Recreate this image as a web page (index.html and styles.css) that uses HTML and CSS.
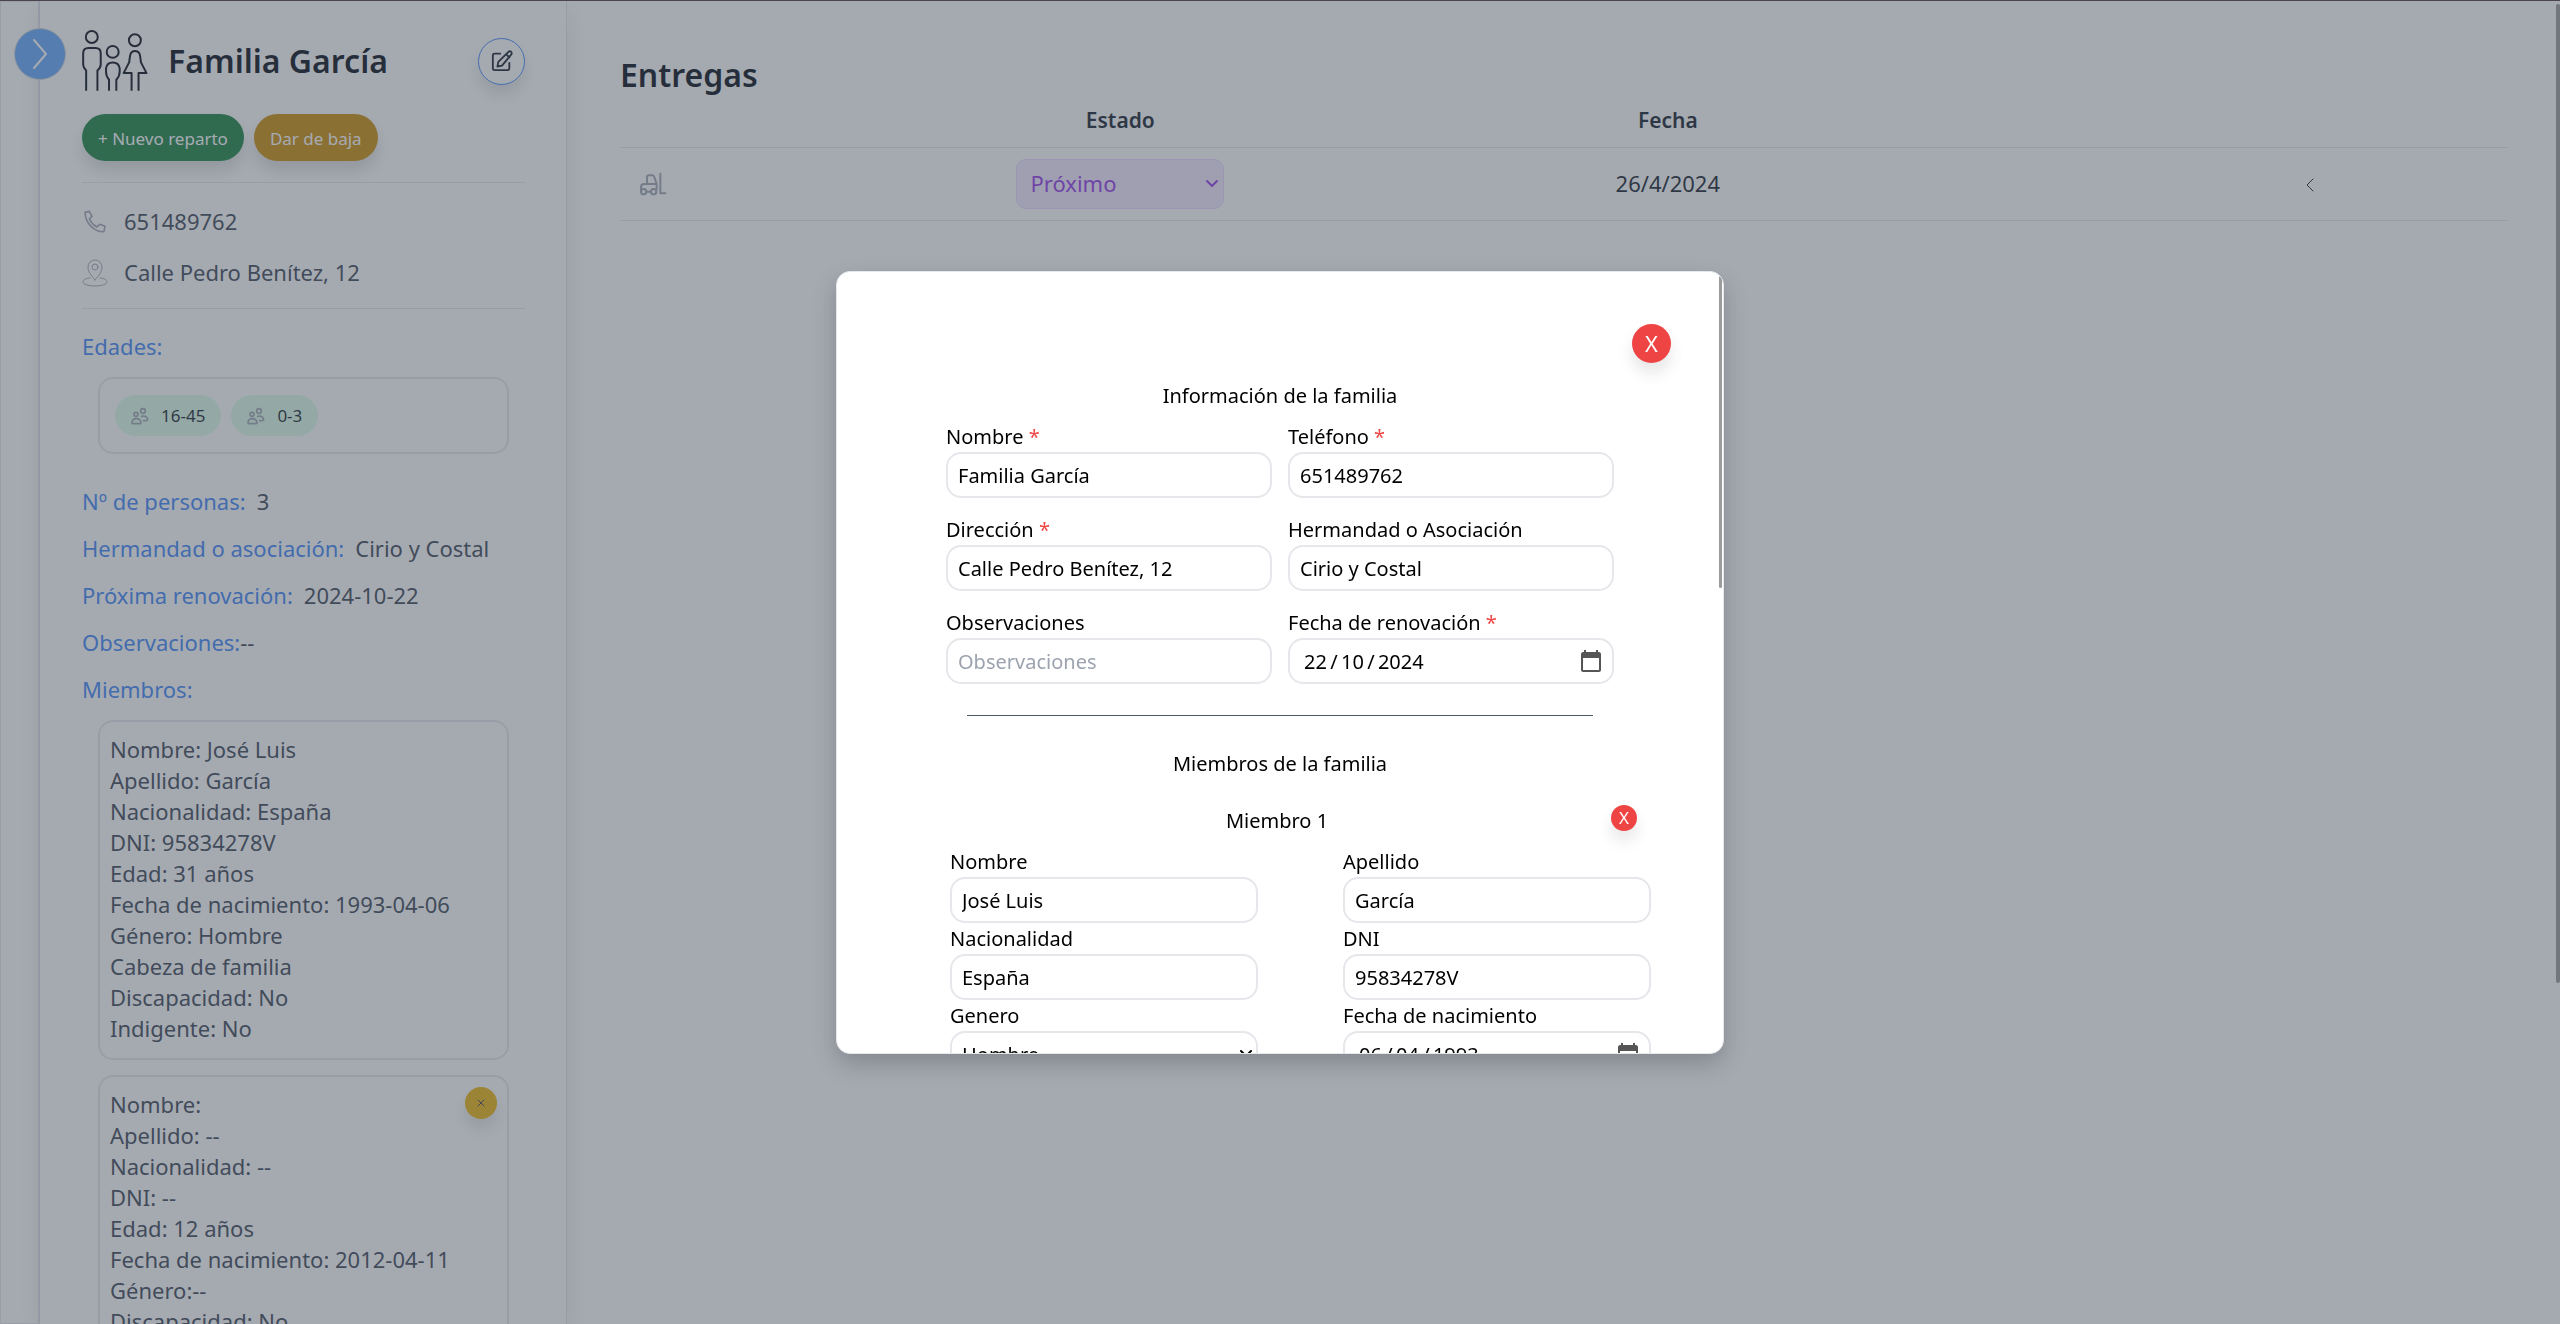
FILE: index.html
```html
<!DOCTYPE html>
<html lang="es">
<head>
<meta charset="utf-8">
<meta name="viewport" content="width=device-width, initial-scale=1">
<title>Familia García</title>
<link rel="stylesheet" href="styles.css">
</head>
<body>
<div class="page">
  <div class="rail">
    <button class="rail-toggle" type="button" aria-label="Abrir menú">
      <svg width="18" height="34" viewBox="0 0 18 34"><path d="M3 3 L15 17 L3 31"/></svg>
    </button>
  </div>

  <aside class="sidebar">
    <header class="family-head">
      <svg class="family-icon" width="66" height="62" viewBox="65 28 198 187">
        <circle cx="94" cy="49" r="18"/>
        <path d="M77 211V150Q68 142 68 132V98Q68 82 84 82H105Q121 82 121 98V132Q121 142 111 150V211"/>
        <circle cx="157" cy="94" r="18"/>
        <path d="M146 211V178Q137 168 137 155V143Q140 126 157 126Q175 126 178 143V155Q178 168 168 178V211"/>
        <circle cx="224" cy="59" r="18"/>
        <path d="M214 211V158H190L207 125C209 100 212 91 224 91C238 91 240 100 242 125L259 158H235V211"/>
      </svg>
      <h1>Familia García</h1>
      <button class="edit-button" type="button" aria-label="Editar familia">
        <svg width="22" height="22" viewBox="0 0 24 24"><path d="M10 4H4a2 2 0 0 0-2 2v14a2 2 0 0 0 2 2h14a2 2 0 0 0 2-2v-6"/><path d="M19 2a2 2 0 0 1 3 3L12 17l-5 1 1-5z"/><path d="M17 5l3 3"/></svg>
      </button>
    </header>
    <div class="actions">
      <button class="pill-button green" type="button">+ Nuevo reparto</button>
      <button class="pill-button amber" type="button">Dar de baja</button>
    </div>
    <div class="contact">
      <p><svg width="26" height="26" viewBox="18 20 78 78" stroke-width="5"><path d="M27 30L40 27L48 42L40 50Q48 66 62 74L72 66L87 72L84 87Q74 92 52 78Q28 60 27 30z"/></svg>651489762</p>
      <p><svg width="26" height="30" viewBox="0 0 26 30"><path d="M13 22C9 17 6 14 6 9a7 7 0 0 1 14 0c0 5-3 8-7 13z"/><circle cx="13" cy="9" r="3"/><path d="M8 20c-4 0-7 2-7 4s5 4 12 4 12-2 12-4-3-4-7-4"/></svg>Calle Pedro Benítez, 12</p>
    </div>
    <h2 class="label">Edades:</h2>
    <div class="card ages">
      <span class="age"><svg width="18" height="18" viewBox="18 18 54 54"><circle cx="33" cy="40" r="6"/><circle cx="54" cy="30" r="7"/><path d="M21 65Q22 53 34 53Q46 53 48 65Q48 68 44 68H25Q21 68 21 65z"/><path d="M50 46Q64 42 68 55Q68 60 56 59"/></svg>16-45</span>
      <span class="age"><svg width="18" height="18" viewBox="18 18 54 54"><circle cx="33" cy="40" r="6"/><circle cx="54" cy="30" r="7"/><path d="M21 65Q22 53 34 53Q46 53 48 65Q48 68 44 68H25Q21 68 21 65z"/><path d="M50 46Q64 42 68 55Q68 60 56 59"/></svg>0-3</span>
    </div>
    <dl class="facts">
      <div><dt>Nº de personas:</dt><dd>3</dd></div>
      <div><dt>Hermandad o asociación:</dt><dd>Cirio y Costal</dd></div>
      <div><dt>Próxima renovación:</dt><dd>2024-10-22</dd></div>
      <div class="tight"><dt>Observaciones:</dt><dd>--</dd></div>
    </dl>
    <h2 class="label">Miembros:</h2>
    <ul class="card member">
      <li>Nombre: José Luis</li>
      <li>Apellido: García</li>
      <li>Nacionalidad: España</li>
      <li>DNI: 95834278V</li>
      <li>Edad: 31 años</li>
      <li>Fecha de nacimiento: 1993-04-06</li>
      <li>Género: Hombre</li>
      <li>Cabeza de familia</li>
      <li>Discapacidad: No</li>
      <li>Indigente: No</li>
    </ul>
    <div class="card-wrap">
      <ul class="card member">
        <li>Nombre:</li>
        <li>Apellido: --</li>
        <li>Nacionalidad: --</li>
        <li>DNI: --</li>
        <li>Edad: 12 años</li>
        <li>Fecha de nacimiento: 2012-04-11</li>
        <li>Género:--</li>
        <li>Discapacidad: No</li>
      </ul>
      <button class="member-remove" type="button" aria-label="Dar de baja al miembro">
        <svg width="8" height="8" viewBox="0 0 8 8"><path d="M1 1l6 6M7 1L1 7"/></svg>
      </button>
    </div>
  </aside>

  <main class="deliveries">
    <h2>Entregas</h2>
    <table>
      <colgroup><col class="c-side"><col class="c-state"><col class="c-date"><col class="c-side"></colgroup>
      <thead><tr><th></th><th>Estado</th><th>Fecha</th><th></th></tr></thead>
      <tbody><tr>
        <td class="cell-icon"><svg width="28" height="24" viewBox="28 34 84 72"><path d="M52 70V50Q52 44 58 44H68Q72 44 74 49L81 70V86M34 88V80Q34 70 44 70H81M51 93H63M92 39V98H107"/><circle cx="42" cy="93" r="8"/><circle cx="72" cy="93" r="8"/></svg></td>
        <td><span class="select-box state"><select aria-label="Estado"><option>Próximo</option></select><svg width="14" height="10" viewBox="0 0 14 10"><path d="M2 2l5 5 5-5"/></svg></span></td>
        <td>26/4/2024</td>
        <td><svg class="fold" width="8" height="14" viewBox="0 0 8 14"><path d="M7 1L1 7l6 6"/></svg></td>
      </tr></tbody>
    </table>
  </main>
</div>

<div class="overlay">
  <div class="page-scroll"></div>
  <section class="modal" role="dialog" aria-modal="true" aria-label="Editar familia">
    <div class="modal-scroll"></div>
    <div class="modal-top"><button class="close" type="button">X</button></div>
    <form>
      <h3>Información de la familia</h3>
      <div class="family-grid">
        <div class="field"><label for="f-nombre">Nombre <b>*</b></label><input id="f-nombre" type="text" value="Familia García"></div>
        <div class="field"><label for="f-tel">Teléfono <b>*</b></label><input id="f-tel" type="text" value="651489762"></div>
        <div class="field"><label for="f-dir">Dirección <b>*</b></label><input id="f-dir" type="text" value="Calle Pedro Benítez, 12"></div>
        <div class="field"><label for="f-her">Hermandad o Asociación</label><input id="f-her" type="text" value="Cirio y Costal"></div>
        <div class="field"><label for="f-obs">Observaciones</label><input id="f-obs" type="text" placeholder="Observaciones"></div>
        <div class="field"><label for="f-ren">Fecha de renovación <b>*</b></label><span class="date-box"><input id="f-ren" type="text" value="22&#8201;/&#8201;10&#8201;/&#8201;2024"><svg width="20" height="22" viewBox="0 0 20 22"><path fill-rule="evenodd" d="M3 0h2v2h10V0h2v2h1c1 0 2 1 2 2v16c0 1-1 2-2 2H2c-1 0-2-1-2-2V4c0-1 1-2 2-2h1zM2 8v12h16V8z"/></svg></span></div>
      </div>
      <hr>
      <h3>Miembros de la familia</h3>
      <div class="member-head"><h4>Miembro 1</h4><button class="close small" type="button">X</button></div>
      <div class="member-grid">
        <div class="field"><label for="m-nombre">Nombre</label><input id="m-nombre" type="text" value="José Luis"></div>
        <div class="field"><label for="m-ape">Apellido</label><input id="m-ape" type="text" value="García"></div>
        <div class="field"><label for="m-nac">Nacionalidad</label><input id="m-nac" type="text" value="España"></div>
        <div class="field"><label for="m-dni">DNI</label><input id="m-dni" type="text" value="95834278V"></div>
        <div class="field"><label for="m-gen">Genero</label><span class="select-box"><select id="m-gen"><option>Hombre</option></select><svg width="14" height="10" viewBox="0 0 14 10"><path d="M2 2l5 5 5-5"/></svg></span></div>
        <div class="field"><label for="m-fec">Fecha de nacimiento</label><span class="date-box"><input id="m-fec" type="text" value="06&#8201;/&#8201;04&#8201;/&#8201;1993"><svg width="20" height="22" viewBox="0 0 20 22"><path fill-rule="evenodd" d="M3 0h2v2h10V0h2v2h1c1 0 2 1 2 2v16c0 1-1 2-2 2H2c-1 0-2-1-2-2V4c0-1 1-2 2-2h1zM2 8v12h16V8z"/></svg></span></div>
      </div>
    </form>
  </section>
</div>
</body>
</html>
```
FILE: styles.css
```css
* { box-sizing: border-box; margin: 0; padding: 0; }
html, body { height: 100%; overflow: hidden; }
body {
  border-top: 1px solid #4b464b;
  background: #fff;
  color: #111827;
  font: 22px/31px "Noto Sans", sans-serif;
}
button, input, select { font: inherit; color: inherit; border: 0; background: none; }
svg { display: block; flex: none; fill: none; stroke: currentColor; stroke-linecap: round; stroke-linejoin: round; }
ul { list-style: none; }
.page { display: flex; height: 100%; }

.rail { flex: none; width: 40px; border: 1px solid #e5e7eb; border-right: 2px solid #d9dce6; position: relative; z-index: 1; }
.rail-toggle {
  position: absolute; left: 13px; top: 26px; width: 52px; height: 52px;
  display: grid; place-items: center; border: 1px solid #d1d5db; border-radius: 50%;
  background: #60a5fa; color: #fff;
}
.rail-toggle svg { stroke-width: 2; }

.sidebar {
  flex: none; width: 527px; padding: 27px 41px 0 42px; overflow: hidden;
  border-right: 1px solid #e5e7eb; color: #374151;
  box-shadow: 0 10px 24px rgba(0, 0, 0, .1);
}
.family-head { display: flex; align-items: center; height: 66px; }
.family-icon { color: #030712; stroke-width: 6; stroke-linecap: butt; }
h1, .deliveries h2 { font-size: 32px; line-height: 40px; font-weight: 600; color: #030712; }
h1 { margin-left: 20px; flex: 1; }
.edit-button {
  width: 47px; height: 47px; display: grid; place-items: center; border: 1px solid #3b82f6;
  border-radius: 50%; color: #111827; box-shadow: 0 10px 16px rgba(0, 0, 0, .12);
}
.edit-button svg { stroke-width: 2; }
.actions { display: flex; gap: 10px; padding: 20px 0 21px; border-bottom: 1px solid #e5e7eb; }
.pill-button { height: 47px; padding: 2px 16px 0; border-radius: 24px; color: #fff; font-size: 17px; box-shadow: 0 10px 16px rgba(0, 0, 0, .14); }
.green { background: #15803d; }
.amber { background: #ca8a04; }
.contact { display: grid; gap: 20px; padding: 23px 0 20px; border-bottom: 1px solid #e5e7eb; }
.contact p { display: flex; align-items: center; gap: 16px; }
.contact svg { color: #9ca3af; }
.label, dt { font-size: 22px; font-weight: 400; color: #3b82f6; }
.contact + .label { margin-top: 22px; }
.card { margin: 0 16px; border: 2px solid #e5e7eb; border-radius: 15px; }
.ages { display: flex; gap: 10px; margin-top: 15px; padding: 16px 15px; }
.age {
  display: flex; align-items: center; gap: 12px; height: 41px; padding: 0 16px;
  border-radius: 21px; background: #dcfce7; color: #111827; font-size: 17px; line-height: 24px;
}
.age svg { color: #9ca3af; stroke-width: 5; }
.facts { display: grid; gap: 16px; margin: 32px 0 16px; }
.facts div { display: flex; gap: 11px; }
.facts .tight { gap: 0; }
.member { margin-top: 15px; padding: 12px 10px 14px; }
.card-wrap { position: relative; }
.member-remove {
  position: absolute; right: 28px; top: 12px; width: 32px; height: 32px; display: grid; place-items: center;
  border-radius: 50%; background: #eab308; box-shadow: 0 10px 16px rgba(0, 0, 0, .12);
}

.deliveries { flex: 1; padding: 54px 52px 0 53px; }
table { width: 100%; table-layout: fixed; border-collapse: collapse; }
.c-side { width: 21%; }
.c-state { width: 11%; }
.c-date { width: 47%; }
th { height: 52px; font-size: 21px; font-weight: 600; }
td { height: 73px; text-align: center; }
tr { border-bottom: 1px solid #e5e7eb; }
.cell-icon { padding-left: 19px; }
.cell-icon svg { color: #9ca3af; stroke-width: 6; }
.fold { display: inline-block; }
.select-box { display: flex; align-items: center; position: relative; }
.select-box select { appearance: none; width: 100%; }
.select-box > svg { position: absolute; right: 5px; stroke-width: 2; }
.state { color: #9333ea; }
.state select { height: 50px; padding: 0 13px; border: 1px solid #e9d5ff; border-radius: 10px; background: #f3e8ff; }

.overlay {
  position: fixed; inset: 1px 0 0; z-index: 2; display: flex; align-items: center; justify-content: center;
  background: rgba(75, 85, 99, .5);
}
.page-scroll { position: absolute; right: 0; top: 3px; width: 4px; height: 74%; border-radius: 2px; background: #73767b; }
.modal {
  position: relative; width: 888px; max-width: 96%; height: 783px; max-height: 90%; overflow: hidden; padding: 52px;
  border: 1px solid #e5e7eb; border-radius: 14px; background: #fff; color: #000;
  font-size: 20px; box-shadow: 0 10px 24px rgba(0, 0, 0, .2);
}
.modal-scroll { position: absolute; right: 1px; top: 4px; width: 3px; height: 40%; border-radius: 2px; background: #9b9b9b; }
.modal-top { display: flex; justify-content: flex-end; }
.close { width: 39px; height: 39px; border-radius: 50%; background: #ef4444; color: #fff; font-size: 22px; line-height: 39px; box-shadow: 0 10px 16px rgba(0, 0, 0, .1); }
.close.small { width: 26px; height: 26px; font-size: 17px; line-height: 26px; }
h3, h4 { font-size: 20px; font-weight: 400; text-align: center; }
.modal-top + form > h3:first-child { margin-top: 17px; }
.family-grid { display: grid; grid-template-columns: 1fr 1fr; gap: 16px; margin: 10px 57px 0; }
.field { display: flex; flex-direction: column; }
label b { font-weight: 400; color: #ef4444; }
.field input, .field select { width: 100%; height: 46px; padding: 0 10px; border: 2px solid #e5e7eb; border-radius: 15px; background: #fff; }
.field input::placeholder { color: #9ca3af; opacity: 1; }
.date-box { display: flex; align-items: center; position: relative; }
.date-box input { padding-left: 14px; }
.date-box svg { position: absolute; right: 13px; fill: #555; stroke: none; }
hr { height: 1px; margin: 31px 78px 32px; border: 0; background: #4b5563; }
.member-head { display: grid; grid-template-columns: 1fr auto 1fr; align-items: start; margin: 26px 34px 0 28px; }
.member-head h4 { grid-column: 2; }
.member-head button { justify-self: end; }
.member-grid { display: grid; grid-template-columns: 1fr 1fr; column-gap: 85px; margin: 10px 20px 0 61px; }
```
